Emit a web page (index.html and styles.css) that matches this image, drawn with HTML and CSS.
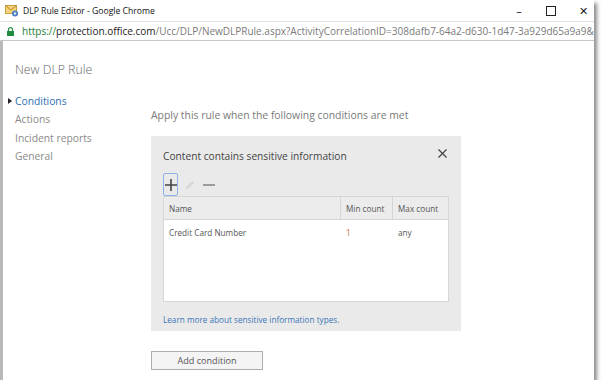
FILE: index.html
```
<!DOCTYPE html>
<html lang="en">
<head>
    <meta charset="UTF-8">
    <title>DLP Rule Editor - Google Chrome</title>
    <link rel="stylesheet" href="styles.css">
</head>
<body>
    <div class="window">
        <div class="titlebar">
            <svg class="app-icon" width="14" height="13" viewBox="0 0 14 13">
                <rect x="0.5" y="1.5" width="11" height="8" fill="#f3d27a" stroke="#c9a043"/>
                <path d="M0.5 1.5 L6 6 L11.5 1.5" fill="none" stroke="#b8862b"/>
                <circle cx="10" cy="9.5" r="3" fill="#4a7cc4"/>
                <circle cx="10" cy="9.5" r="1.2" fill="#dfe9f7"/>
            </svg>
            <span class="window-title">DLP Rule Editor - Google Chrome</span>
            <div class="window-controls">
                <span class="ctl">&#8211;</span>
                <span class="ctl"><span class="max-box"></span></span>
                <span class="ctl">&#10005;</span>
            </div>
        </div>
        <div class="addressbar">
            <svg class="lock" width="7" height="9" viewBox="0 0 7 9">
                <path d="M1.5 4 V2.6 A2 2 0 0 1 5.5 2.6 V4" fill="none" stroke="#1e8e3e" stroke-width="1.2"/>
                <rect x="0" y="4" width="7" height="5" fill="#1e8e3e"/>
            </svg>
            <span class="url"><span class="scheme">https://</span><span class="host">protection.office.com</span>/Ucc/DLP/NewDLPRule.aspx?ActivityCorrelationID=308dafb7-64a2-d630-1d47-3a929d65a9a9&amp;reqIc</span>
        </div>

        <div class="page">
            <h1 class="page-title">New DLP Rule</h1>
            <div class="layout">
                <ul class="steps">
                    <li class="step current">Conditions</li>
                    <li class="step">Actions</li>
                    <li class="step">Incident reports</li>
                    <li class="step">General</li>
                </ul>

                <div class="main">
                    <p class="intro">Apply this rule when the following conditions are met</p>

                    <div class="condition">
                        <div class="condition-head">
                            <span class="condition-title">Content contains sensitive information</span>
                            <svg class="close" width="9" height="9" viewBox="0 0 9 9"><path d="M0.5 0.5 L8.5 8.5 M8.5 0.5 L0.5 8.5" stroke="#444" stroke-width="1.2"/></svg>
                        </div>
                        <div class="toolbar">
                            <span class="tool tool-add">
                                <svg width="12" height="12" viewBox="0 0 12 12"><path d="M6 0 V12 M0 6 H12" stroke="#444" stroke-width="1.6"/></svg>
                            </span>
                            <span class="tool">
                                <svg width="10" height="10" viewBox="0 0 10 10"><path d="M1 9 L1.6 6.8 L7.4 1 L9 2.6 L3.2 8.4 Z" fill="#d6d6d6"/></svg>
                            </span>
                            <span class="tool">
                                <svg width="12" height="12" viewBox="0 0 12 12"><path d="M0 6 H12" stroke="#8a8a8a" stroke-width="1.6"/></svg>
                            </span>
                        </div>

                        <div class="grid">
                            <div class="grid-row grid-header">
                                <div class="cell col-name">Name</div>
                                <div class="cell col-min">Min count</div>
                                <div class="cell col-max">Max count</div>
                            </div>
                            <div class="grid-row">
                                <div class="cell col-name">Credit Card Number</div>
                                <div class="cell col-min count">1</div>
                                <div class="cell col-max">any</div>
                            </div>
                        </div>

                        <a class="learn-more" href="#">Learn more about sensitive information types.</a>
                    </div>

                    <button class="add-btn">Add condition</button>
                </div>
            </div>
        </div>
    </div>
</body>
</html>
```

FILE: styles.css
```
body {
    margin: 0;
    background: #ffffff;
    font-family: "Open Sans", "Noto Sans", sans-serif;
    overflow: hidden;
}

.window {
    width: 594px;
    height: 380px;
    background: white;
    box-shadow: 3px 3px 4px rgba(0,0,0,0.45);
    overflow: hidden;
    display: flex;
    flex-direction: column;
}

/* window chrome */
.titlebar {
    height: 21px;
    display: flex;
    align-items: center;
    padding-left: 5px;
    border-bottom: 1px solid #e2e2e2;
}

.app-icon {
    margin-right: 4px;
}

.window-title {
    font-size: 8.6px;
    color: #111;
}

.window-controls {
    margin-left: auto;
    display: flex;
    gap: 10px;
}

.ctl {
    width: 22px;
    height: 21px;
    display: flex;
    align-items: center;
    justify-content: center;
    font-size: 11px;
    color: #222;
}

.max-box {
    width: 8px;
    height: 8px;
    border: 1px solid #222;
}

.addressbar {
    height: 18px;
    display: flex;
    align-items: center;
    padding-left: 7px;
    border-bottom: 1px solid #c8c8c8;
    white-space: nowrap;
    overflow: hidden;
}

.lock {
    margin-right: 8px;
    flex-shrink: 0;
}

.url {
    font-size: 10px;
    color: #7a7a7a;
}

.url .scheme {
    color: #1e7b3a;
}

.url .host {
    color: #222;
}

/* page */
.page {
    flex: 1;
    border-left: 3px solid #b9b9b9;
    padding-left: 12px;
}

.page-title {
    margin: 20px 0 0 0;
    font-size: 12.3px;
    font-weight: 300;
    color: #666;
}

.layout {
    display: flex;
    margin-top: 14px;
}

.steps {
    list-style: none;
    margin: 0;
    padding: 0;
    width: 136px;
}

.step {
    font-size: 10.3px;
    line-height: 18.4px;
    color: #8a8a8a;
    position: relative;
}

.step.current {
    color: #2c6fb3;
}

.step.current::before {
    content: "";
    position: absolute;
    left: -7px;
    top: 6px;
    border-left: 4px solid #222;
    border-top: 3px solid transparent;
    border-bottom: 3px solid transparent;
}

.main {
    width: 310px;
}

.intro {
    margin: 15px 0 0 0;
    font-size: 10.4px;
    line-height: 16px;
    color: #7a7a7a;
}

.condition {
    margin-top: 13px;
    background: #eaeaea;
    padding: 11px 12px 0 12px;
    height: 184px;
}

.condition-head {
    display: flex;
    justify-content: space-between;
    align-items: center;
    height: 17px;
}

.condition-title {
    font-size: 10.2px;
    color: #444;
}

.close {
    margin-right: 2px;
    margin-top: -5px;
}

.toolbar {
    display: flex;
    align-items: center;
    margin-top: 9px;
    height: 23px;
}

.tool {
    width: 15px;
    height: 23px;
    display: flex;
    align-items: center;
    justify-content: center;
    margin-right: 4px;
}

.tool-add {
    box-sizing: border-box;
    border: 1px solid #8fb1e3;
    border-radius: 2px;
}

.grid {
    background: white;
    border: 1px solid #d6d6d6;
    height: 104px;
    width: 284px;
}

.grid-row {
    display: flex;
    height: 24px;
    align-items: center;
}

.grid-header {
    background: #ececec;
    border-bottom: 1px solid #d6d6d6;
    height: 22px;
}

.cell {
    font-size: 8.2px;
    color: #555;
    padding-left: 5px;
    box-sizing: border-box;
    height: 100%;
    display: flex;
    align-items: center;
}

.grid-header .cell {
    border-right: 1px solid #d6d6d6;
}

.grid-header .cell:last-child {
    border-right: none;
}

.grid-row:not(.grid-header) .cell {
    padding-top: 1px;
}

.col-name { width: 177px; }
.col-min { width: 52px; }
.col-max { flex: 1; }

.count {
    color: #c4702e;
}

.learn-more {
    display: block;
    margin-top: 12px;
    font-size: 8.2px;
    color: #3a76b8;
    text-decoration: none;
}

.add-btn {
    margin-top: 20px;
    width: 112px;
    height: 19px;
    background: #f4f4f4;
    border: 1px solid #adadad;
    font-family: inherit;
    font-size: 9.1px;
    color: #555;
    padding: 0;
}
```
